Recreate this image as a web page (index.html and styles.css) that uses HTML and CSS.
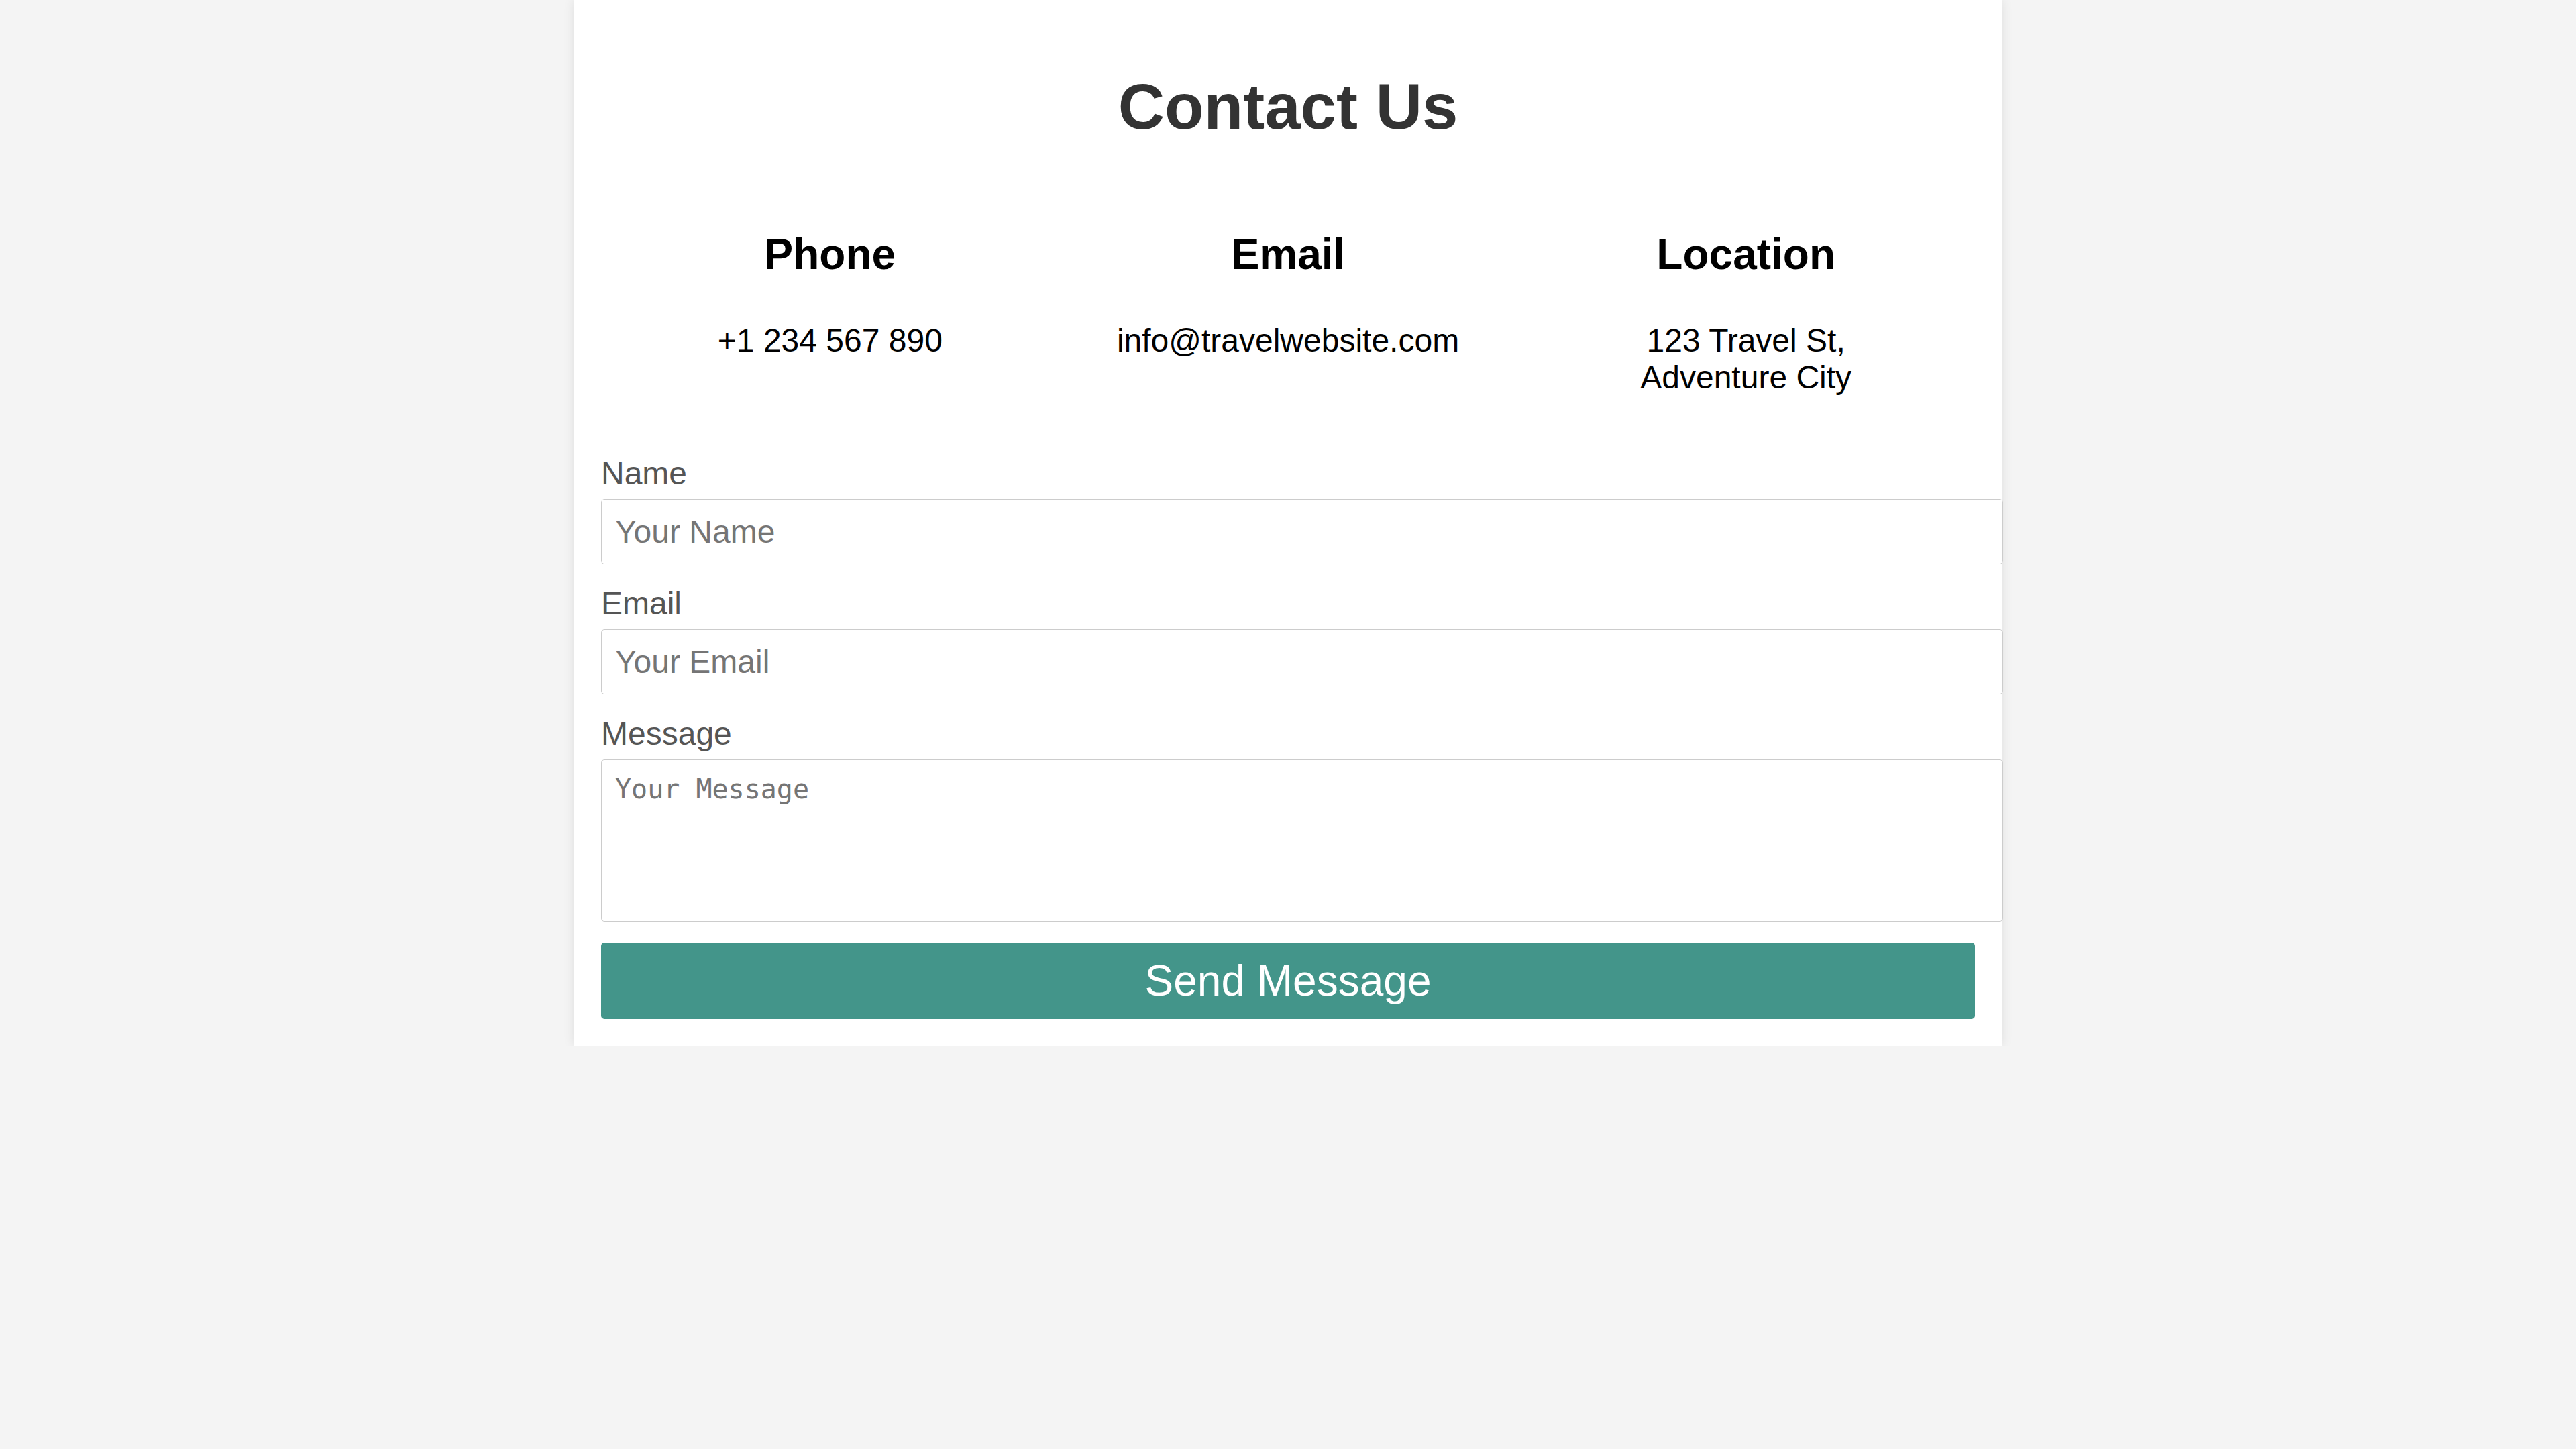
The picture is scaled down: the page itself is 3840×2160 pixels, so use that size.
FILE: index.html
```html
<!DOCTYPE html>
<html lang="en">
<head>
<meta charset="utf-8">
<title>Contact Us</title>
<link rel="stylesheet" href="styles.css">
</head>
<body>
<div class="card">
  <h1 class="title">Contact Us</h1>
  <div class="info">
    <div class="info-item">
      <h3 class="info-head">Phone</h3>
      <p class="info-text">+1 234 567 890</p>
    </div>
    <div class="info-item">
      <h3 class="info-head">Email</h3>
      <p class="info-text">info@travelwebsite.com</p>
    </div>
    <div class="info-item">
      <h3 class="info-head">Location</h3>
      <p class="info-text">123 Travel St, Adventure City</p>
    </div>
  </div>
  <form class="form">
    <label class="label" for="name">Name</label>
    <input class="field" id="name" type="text" placeholder="Your Name">
    <label class="label" for="email">Email</label>
    <input class="field" id="email" type="email" placeholder="Your Email">
    <label class="label" for="message">Message</label>
    <textarea class="field area" id="message" placeholder="Your Message"></textarea>
    <button class="send" type="button">Send Message</button>
  </form>
</div>
</body>
</html>
```
FILE: styles.css
```css
body {
  margin: 0;
  background: #f4f4f4;
  font-family: "Liberation Sans", Arial, sans-serif;
}

.card {
  width: 2048px;
  margin: 0 auto;
  padding: 40px;
  background: #fff;
  box-shadow: 0 0 16px rgba(0, 0, 0, 0.1);
}

.title {
  margin: 64px 0;
  font-size: 96px;
  font-weight: bold;
  color: #333;
  text-align: center;
}

.info {
  display: flex;
  margin-bottom: 40px;
}

.info-item {
  flex: 1;
  padding: 0 80px;
  text-align: center;
  color: #000;
}

.info-head {
  margin: 64px 0;
  font-size: 64px;
  font-weight: bold;
}

.info-text {
  margin: 48px 0;
  font-size: 48px;
}

.form {
  margin: 0;
}

.label {
  display: block;
  margin-bottom: 11px;
  font-size: 48px;
  color: #555;
}

.field {
  display: block;
  width: 100%;
  margin: 0 0 31px;
  padding: 20px;
  border: 1px solid #ccc;
  border-radius: 5px;
  font-family: "Liberation Sans", Arial, sans-serif;
  font-size: 48px;
  color: #333;
  background: #fff;
  outline: none;
}

.field::placeholder {
  color: #757575;
}

.area {
  height: 200px;
  resize: none;
  font-family: "DejaVu Sans Mono", monospace;
  font-size: 40px;
}

.send {
  display: block;
  width: 100%;
  padding: 20px;
  border: none;
  border-radius: 5px;
  background: #43958a;
  color: #fff;
  font-family: "Liberation Sans", Arial, sans-serif;
  font-size: 64px;
  cursor: pointer;
}
```
